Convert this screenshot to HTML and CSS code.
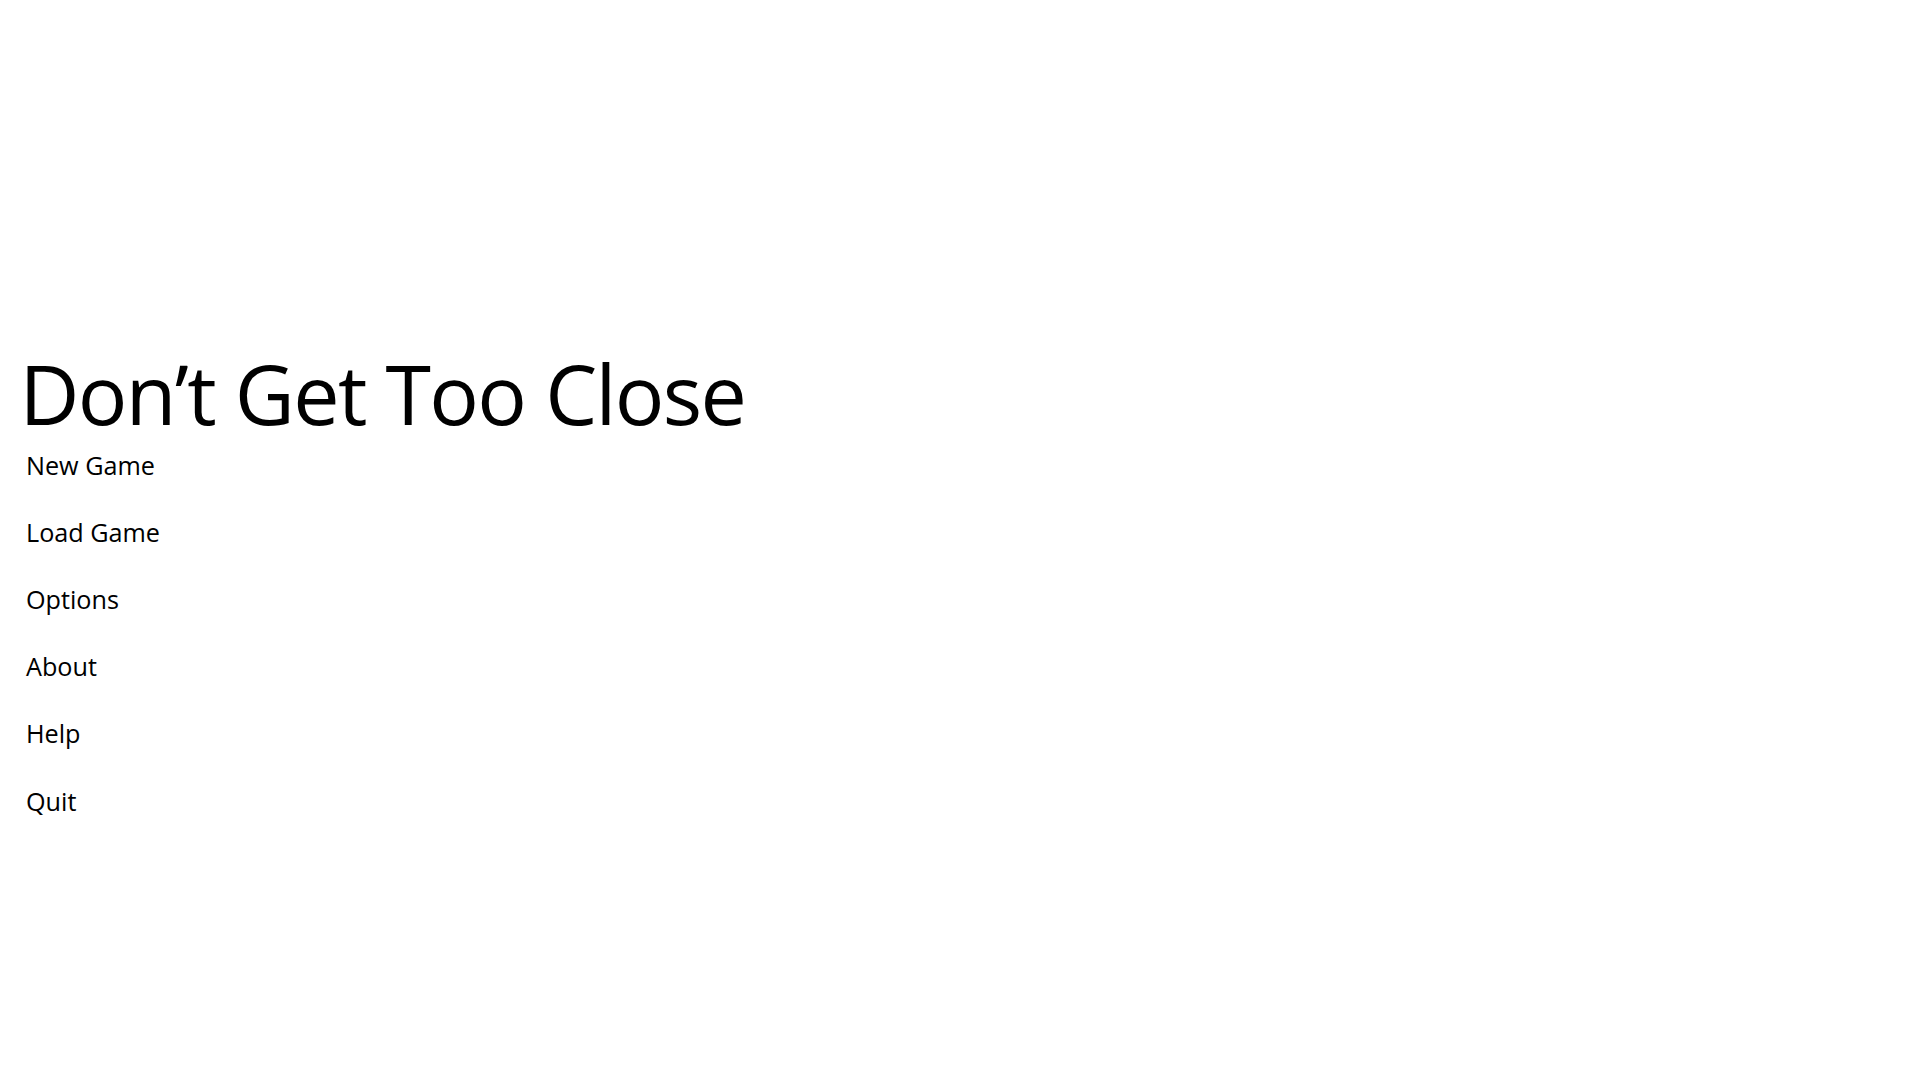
FILE: index.html
```html
<!DOCTYPE html>
<html lang="en">
<head>
<meta charset="utf-8">
<title>Don’t Get Too Close</title>
<link rel="stylesheet" href="styles.css">
</head>
<body>
<main class="screen">
  <h1 class="title">Don’t Get Too Close</h1>
  <nav class="menu">
    <a class="menu-item" href="#">New Game</a>
    <a class="menu-item" href="#">Load Game</a>
    <a class="menu-item" href="#">Options</a>
    <a class="menu-item" href="#">About</a>
    <a class="menu-item" href="#">Help</a>
    <a class="menu-item" href="#">Quit</a>
  </nav>
</main>
</body>
</html>
```

FILE: styles.css
```css
html, body {
  margin: 0;
  padding: 0;
  background: #ffffff;
}

body {
  font-family: "Open Sans", "Liberation Sans", sans-serif;
  color: #000000;
}

.screen {
  width: 1920px;
  height: 1080px;
  box-sizing: border-box;
  padding-top: 352px;
  padding-left: 19.5px;
  display: flex;
  flex-direction: column;
}

.title {
  margin: 0;
  font-size: 82.6px;
  font-weight: 400;
  line-height: 82.6px;
  letter-spacing: -1.65px;
}

.menu {
  display: flex;
  flex-direction: column;
  gap: 33.2px;
  margin-top: 13px;
  padding-left: 6.5px;
}

.menu-item {
  display: block;
  font-size: 25.2px;
  line-height: 34px;
  color: #000000;
  text-decoration: none;
}
```
